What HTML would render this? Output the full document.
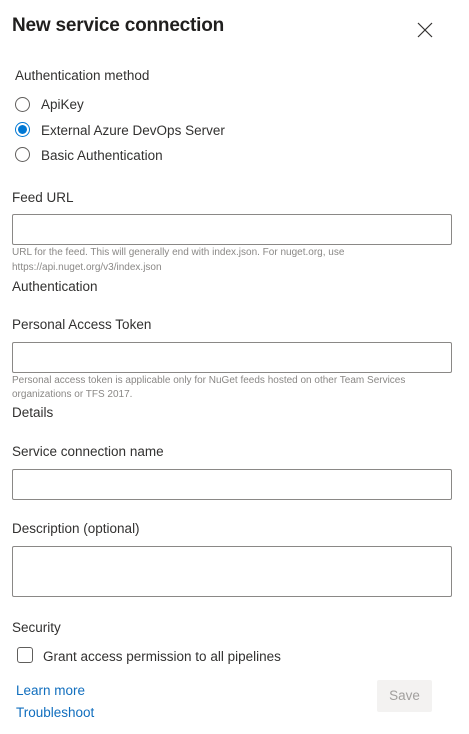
<!DOCTYPE html>
<html><head><style>
body{margin:0;width:469px;height:734px;background:#fff;font-family:"Liberation Sans",sans-serif;color:#323130;position:relative;overflow:hidden}
.a{position:absolute;white-space:nowrap}
.t{font-size:13.5px}
.s{font-size:10px;color:#8a8886}
.in{position:absolute;left:12px;width:438px;border:1px solid #8a8886;border-radius:2px}
.r{position:absolute;left:15px;width:15px;height:15px;border:1px solid #605e5c;border-radius:50%;box-sizing:border-box}
</style></head><body>
<div class="a" style="left:12px;top:15px;font-size:19px;font-weight:600;color:#201f1e;letter-spacing:-0.2px">New service connection</div>
<svg class="a" style="left:417px;top:22px" width="16" height="16"><path d="M1 1L15 15M15 1L1 15" stroke="#323130" stroke-width="1.2"/></svg>
<div class="a t" style="left:15px;top:68px">Authentication method</div>
<div class="r" style="top:97px"></div><div class="a t" style="left:41px;top:97px">ApiKey</div>
<div class="r" style="top:122px;border:1px solid #0078d4"><div style="position:absolute;left:2px;top:2px;width:9px;height:9px;border-radius:50%;background:#0078d4"></div></div><div class="a t" style="left:41px;top:123px">External Azure DevOps Server</div>
<div class="r" style="top:147px"></div><div class="a t" style="left:41px;top:148px">Basic Authentication</div>
<div class="a t" style="left:12px;top:190px">Feed URL</div>
<div class="in" style="top:214px;height:29px"></div>
<div class="a s" style="left:12px;top:247px">URL for the feed. This will generally end with index.json. For nuget.org, use</div>
<div class="a s" style="left:12px;top:262px">https://api.nuget.org/v3/index.json</div>
<div class="a t" style="left:12px;top:279px">Authentication</div>
<div class="a t" style="left:12px;top:317px">Personal Access Token</div>
<div class="in" style="top:342px;height:29px"></div>
<div class="a s" style="left:12px;top:375px">Personal access token is applicable only for NuGet feeds hosted on other Team Services</div>
<div class="a s" style="left:12px;top:389px">organizations or TFS 2017.</div>
<div class="a t" style="left:12px;top:405px">Details</div>
<div class="a t" style="left:12px;top:444px">Service connection name</div>
<div class="in" style="top:469px;height:29px"></div>
<div class="a t" style="left:12px;top:521px">Description (optional)</div>
<div class="in" style="top:546px;height:49px"></div>
<div class="a t" style="left:12px;top:620px">Security</div>
<div class="a" style="left:17px;top:647px;width:14px;height:14px;border:1px solid #605e5c;border-radius:3px"></div>
<div class="a t" style="left:43px;top:649px">Grant access permission to all pipelines</div>
<div class="a t" style="left:16px;top:683px;color:#106ebe">Learn more</div>
<div class="a t" style="left:16px;top:705px;color:#106ebe">Troubleshoot</div>
<div class="a" style="left:377px;top:680px;width:55px;height:32px;background:#f3f2f1;border-radius:2px;color:#a19f9d;font-size:13.5px;text-align:center;line-height:32px">Save</div>
</body></html>
